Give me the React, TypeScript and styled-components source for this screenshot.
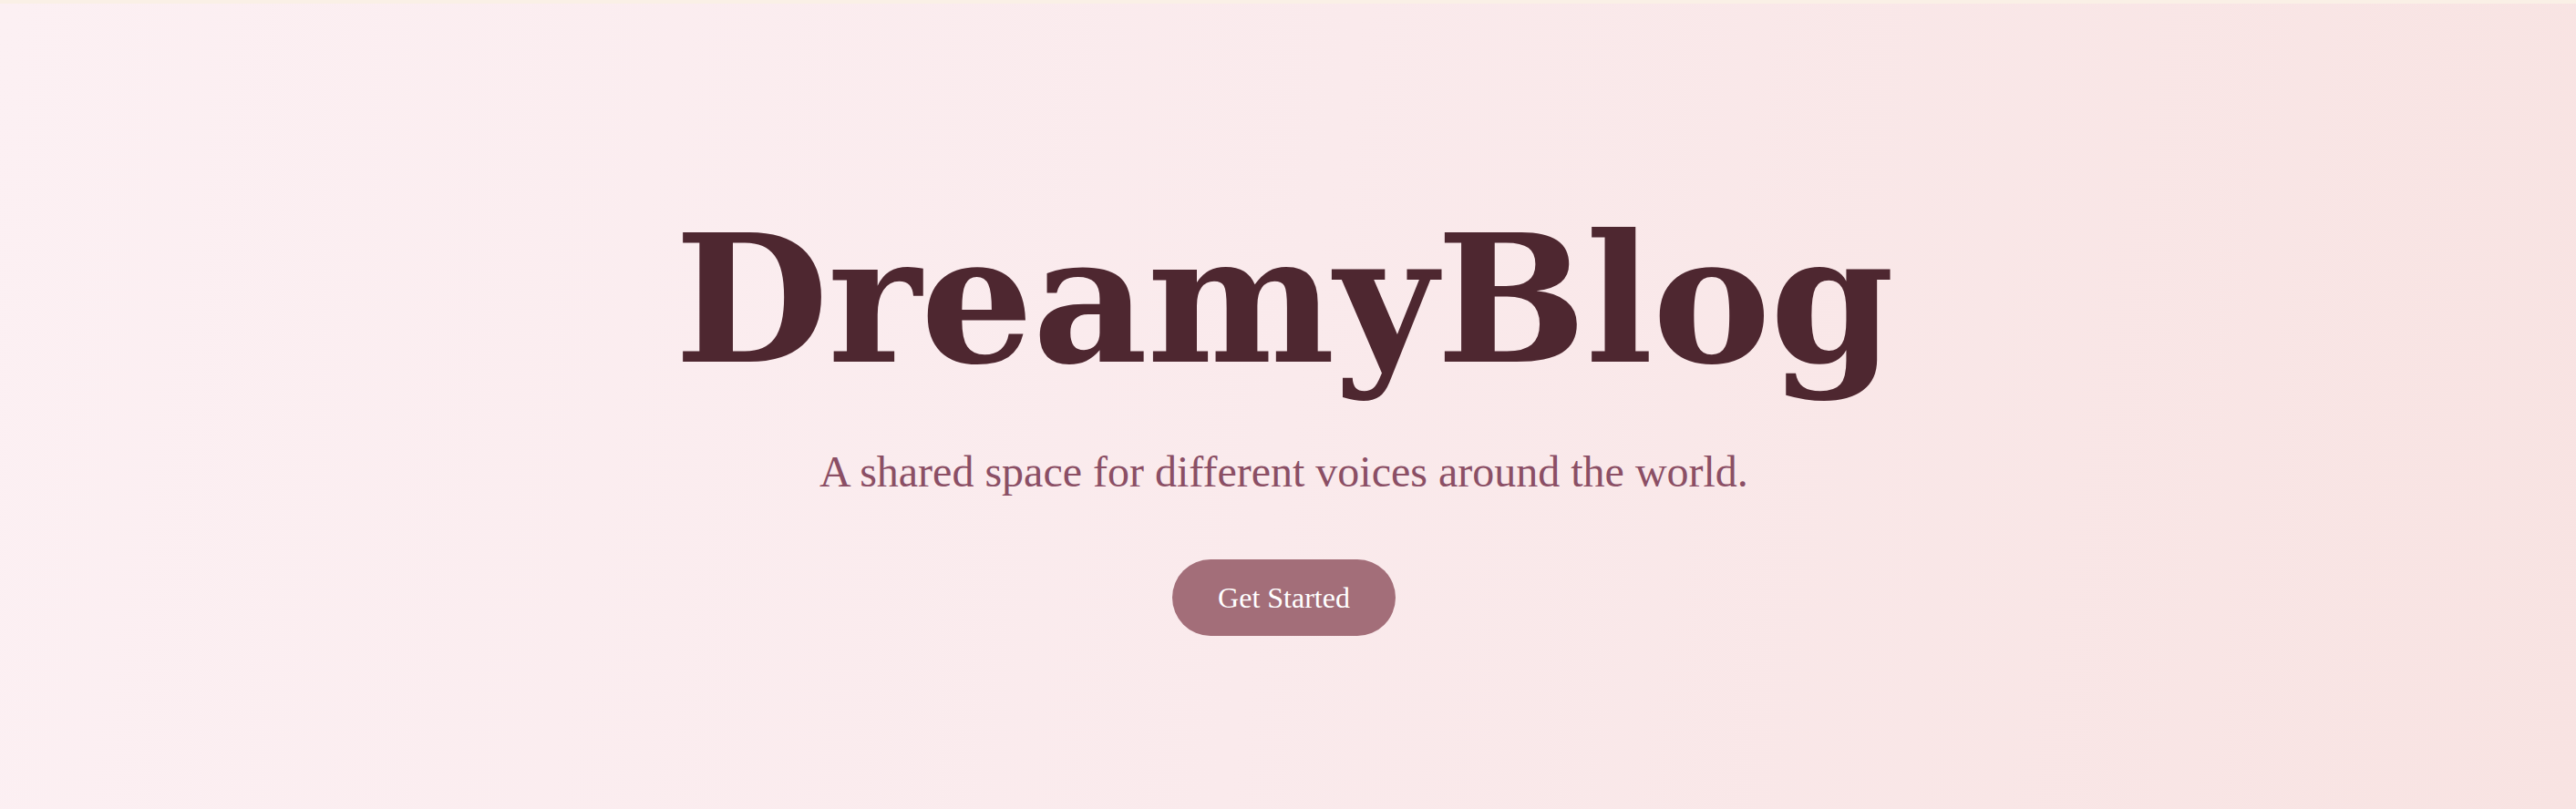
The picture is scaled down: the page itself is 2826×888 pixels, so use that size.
import * as React from 'react';
import styled, { createGlobalStyle } from 'styled-components';

const GlobalStyle = createGlobalStyle`
    html, body {
        margin: 0;
        padding: 0;
    }
    body {
        background: #faf0e6;
    }
`;

const Hero = styled.section`
    margin-top: 4px;
    height: 884px;
    display: flex;
    flex-direction: column;
    align-items: center;
    justify-content: center;
    background: linear-gradient(100deg, #fcf0f3 0%, #faeaec 50%, #f8e3e2 100%);
    box-sizing: border-box;
    padding: 28px 9px 0 0;
`;

const Title = styled.h1`
    margin: 0;
    font-family: "DejaVu Serif", "Liberation Serif", serif;
    font-weight: 700;
    font-size: 195px;
    line-height: 1.1;
    letter-spacing: -1px;
    color: #4e2730;
`;

const Tagline = styled.p`
    margin: 53px 0 0;
    font-family: "Liberation Serif", "Times New Roman", serif;
    font-size: 48px;
    line-height: 1.2;
    color: #8b4f65;
`;

const StartButton = styled.button`
    margin-top: 67px;
    padding: 22px 50px;
    border: none;
    border-radius: 999px;
    background: #a36e79;
    color: #ffffff;
    font-family: "Liberation Serif", "Times New Roman", serif;
    font-size: 32px;
    line-height: 1.25;
    cursor: pointer;
`;

const App: React.FC = () => {
    return (
        <>
            <GlobalStyle />
            <Hero>
                <Title>DreamyBlog</Title>
                <Tagline>A shared space for different voices around the world.</Tagline>
                <StartButton>Get Started</StartButton>
            </Hero>
        </>
    );
};

export default App;
